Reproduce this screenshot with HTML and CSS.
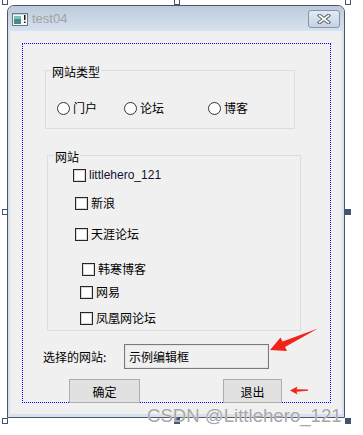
FILE: index.html
```html
<!DOCTYPE html>
<html lang="zh-CN">
<head>
  <meta charset="UTF-8" />
  <title>test04</title>
  <link rel="stylesheet" href="styles.css">
</head>
<body>
  <div class="canvas">
    <div class="win">
      <div class="titlebar">
        <svg class="appicon" width="16" height="13" viewBox="0 0 16 13">
          <rect x="0.5" y="0.5" width="15" height="12" fill="#f4f6f8" stroke="#6d7684"/>
          <rect x="2" y="3" width="7" height="8" fill="#3f8f86"/>
          <rect x="2" y="3" width="7" height="3" fill="#7fc2b4"/>
          <rect x="12" y="2" width="1.5" height="5" fill="#1a1a1a"/>
          <rect x="12" y="8.5" width="1.5" height="1.5" fill="#1a1a1a"/>
          <rect x="1" y="1" width="14" height="1" fill="#c9d3df"/>
        </svg>
        <span class="title">test04</span>
        <span class="close">
          <svg width="14" height="10" viewBox="0 0 14 10">
            <path d="M2.5 1.5 L11.5 8.5 M11.5 1.5 L2.5 8.5" stroke="#5b6470" stroke-width="3.6" stroke-linecap="square"/>
            <path d="M2.5 1.5 L11.5 8.5 M11.5 1.5 L2.5 8.5" stroke="#ffffff" stroke-width="1.6" stroke-linecap="square"/>
          </svg>
        </span>
      </div>
      <div class="client">
        <div class="form">
          <fieldset class="group g1">
            <legend>网站类型</legend>
            <div class="radios">
              <label class="opt"><span class="radio"></span>门户</label>
              <label class="opt"><span class="radio"></span>论坛</label>
              <label class="opt"><span class="radio"></span>博客</label>
            </div>
          </fieldset>

          <fieldset class="group g2">
            <legend>网站</legend>
            <div class="checks">
              <label class="chk c1"><span class="box"></span><span class="latin">littlehero_121</span></label>
              <label class="chk c2"><span class="box"></span>新浪</label>
              <label class="chk c3"><span class="box"></span>天涯论坛</label>
              <label class="chk c4"><span class="box"></span>韩寒博客</label>
              <label class="chk c5"><span class="box"></span>网易</label>
              <label class="chk c6"><span class="box"></span>凤凰网论坛</label>
            </div>
          </fieldset>

          <div class="pick">
            <span class="pick-label">选择的网站:</span>
            <div class="edit">示例编辑框</div>
          </div>

          <div class="actions">
            <button class="btn ok">确定</button>
            <button class="btn quit">退出</button>
          </div>
        </div>
      </div>
    </div>

    <span class="handle h-tl"></span>
    <span class="handle h-tm"></span>
    <span class="handle h-tr"></span>
    <span class="handle h-ml"></span>
    <span class="handle fill h-mr"></span>
    <span class="handle h-bl"></span>
    <span class="handle fill h-bm"></span>
    <span class="handle fill h-br"></span>

    <svg class="marks" width="363" height="435" viewBox="0 0 363 435">
      <polygon points="270,350 280.5,337.5 282.5,341.5 318,328.5 285,347 287,351" fill="#f2231b"/>
      <polygon points="290,390.5 297.5,386.5 296.5,389.3 308,389.6 308,390.8 296.5,391.7 297.5,394.5" fill="#f2231b"/>
    </svg>

    <div class="watermark">CSDN @Littlehero_121</div>
  </div>
</body>
</html>
```

FILE: styles.css
```css
* {
  box-sizing: border-box;
}

body {
  margin: 0;
  background: #ffffff;
  font-family: "Noto Sans CJK SC", "Noto Sans", sans-serif;
  font-size: 12px;
  color: #000;
}

.canvas {
  position: relative;
  width: 363px;
  height: 435px;
  overflow: hidden;
}

/* window frame */
.win {
  margin: 5px 0 0 7px;
  width: 338px;
  height: 413px;
  border: 1px solid #4b5668;
  border-radius: 7px 7px 0 0;
  background: #d8e2ee;
  padding: 0 2px 3px;
  display: flex;
  flex-direction: column;
}

.titlebar {
  height: 25px;
  margin: 0 -2px;
  padding-left: 4px;
  border-radius: 6px 6px 0 0;
  background: linear-gradient(#bccadc, #d6e2ef);
  display: flex;
  align-items: center;
}

.appicon {
  display: block;
  margin-top: 1px;
}

.title {
  margin-left: 4px;
  font-family: "Liberation Sans", sans-serif;
  font-size: 13px;
  color: #a2a2a2;
}

.close {
  margin: 4px 4px 0 auto;
  align-self: flex-start;
  width: 32px;
  height: 18px;
  border: 1px solid #8594aa;
  border-radius: 3px;
  background: linear-gradient(#e2eaf4, #c6d3e3);
  display: flex;
  align-items: center;
  justify-content: center;
}

.close svg {
  display: block;
}

.client {
  flex: 1;
  background: #f0f0f0;
  padding: 12px 0 0 12px;
}

/* designer form with dotted outline */
.form {
  width: 309px;
  border: 1px dotted #0000ff;
}

.group {
  margin: 0;
  padding: 0;
  min-width: 0;
  border: 1px solid #dcdcdc;
}

.group legend {
  margin-left: 6px;
  padding: 3px 1px 0;
  line-height: 14px;
}

.g1 {
  margin: 18px 0 0 22px;
  width: 250px;
}

.g1 legend {
  margin-left: 5px;
}

.g2 {
  margin: 18px 0 0 24px;
  width: 254px;
}

.radios {
  display: flex;
  align-items: center;
  height: 16px;
  margin: 21px 0 12px;
  padding-left: 11px;
}

.opt {
  display: flex;
  align-items: center;
  gap: 3px;
  line-height: 16px;
}

.opt:nth-child(1) {
  width: 67px;
}

.opt:nth-child(2) {
  width: 84px;
}

.radio {
  width: 13px;
  height: 13px;
  border: 1px solid #333;
  border-radius: 50%;
  background: #fff;
}

.checks {
  display: flex;
  flex-direction: column;
  margin-bottom: 4px;
}

.chk {
  display: flex;
  align-items: center;
  gap: 3px;
  height: 16px;
  line-height: 16px;
}

.box {
  width: 13px;
  height: 13px;
  border: 1px solid #262626;
  background: #fff;
  box-shadow: inset 0 0 0 1px #d8d8d8;
}

.latin {
  font-family: "Liberation Sans", sans-serif;
  font-size: 12px;
  color: #101030;
}

.c1 { margin: 3px 0 0 25px; }
.c2 { margin: 12px 0 0 27px; }
.c3 { margin: 15px 0 0 27px; }
.c4 { margin: 19px 0 0 34px; }
.c5 { margin: 7px 0 0 32px; }
.c6 { margin: 10px 0 0 32px; }

/* selected site */
.pick {
  display: flex;
  align-items: center;
  height: 25px;
  margin-top: 13px;
  padding-left: 20px;
}

.pick-label {
  width: 81px;
}

.edit {
  width: 145px;
  height: 25px;
  line-height: 23px;
  padding-left: 4px;
  border: 1px solid #7a7a7a;
  background: #f0f0f0;
  box-shadow: inset 0 0 0 1px #e4e4e4;
}

.actions {
  display: flex;
  margin: 10px 0 -1px;
}

.btn {
  height: 24px;
  padding: 0;
  border: 1px solid #adadad;
  background: #e1e1e1;
  font-family: "Noto Sans CJK SC", sans-serif;
  font-size: 12px;
  color: #000;
}

.ok {
  margin-left: 46px;
  width: 71px;
}

.quit {
  margin-left: 83px;
  width: 59px;
}

/* selection handles of the designer */
.handle {
  position: absolute;
  width: 6px;
  height: 6px;
  border: 1px solid #3e5470;
  background: #fff;
}

.handle.fill {
  background: #3e5470;
}

.h-tl { left: 2px; top: -1px; }
.h-tm { left: 174px; top: -1px; }
.h-tr { left: 345px; top: -1px; }
.h-ml { left: 2px; top: 209px; }
.h-mr { left: 345px; top: 209px; }
.h-bl { left: 2px; top: 418px; }
.h-bm { left: 174px; top: 418px; }
.h-br { left: 345px; top: 418px; }

.marks {
  position: absolute;
  left: 0;
  top: 0;
  pointer-events: none;
}

.watermark {
  position: absolute;
  left: 147px;
  top: 406px;
  font-family: "Liberation Sans", sans-serif;
  font-size: 18.6px;
  line-height: 20px;
  color: #a6a6a6;
  text-shadow: 0 0 1px #fff;
  white-space: nowrap;
}
```
